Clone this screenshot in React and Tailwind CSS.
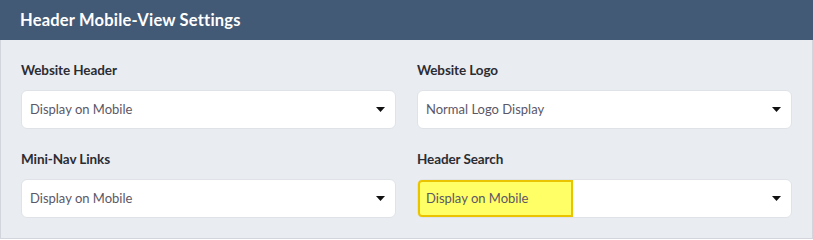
import React from 'react'

function Select({ value, highlight }) {
  return (
    <div className="relative h-[39px] rounded-md border border-[#dfe3e8] bg-white flex items-center justify-between px-[9px]">
      {highlight && (
        <div className="absolute left-0 top-0 bottom-0 w-[155px] rounded-l-sm bg-[#ffff66] border-2 border-[#ebc400]" />
      )}
      <span className="relative -ml-[1px] text-[13px] text-[#5b5766]">{value}</span>
      <svg className="relative mr-[1px]" width="9" height="5" viewBox="0 0 9 5">
        <path d="M0 0 H9 L4.5 5 Z" fill="#111" />
      </svg>
    </div>
  )
}

function Field({ label, value, highlight }) {
  return (
    <div className="flex flex-col">
      <label className="h-5 leading-5 text-[13.5px] font-bold text-[#2c2c33] mb-[10px] tracking-[-0.1px]">{label}</label>
      <Select value={value} highlight={highlight} />
    </div>
  )
}

export default function App() {
  return (
    <div className="w-[813px] h-[240px] bg-white" style={{ fontFamily: 'Lato, "Noto Sans", sans-serif' }}>
      <div className="h-10 bg-[#435a76] flex items-center px-5">
        <h2 className="text-[16.5px] font-bold text-white tracking-[0.2px]">Header Mobile-View Settings</h2>
      </div>
      <div className="bg-[#e9edf2] border-x border-b border-[#d2d6dc] px-5 pt-5 pb-5 grid grid-cols-2 gap-x-[21px] gap-y-5">
        <Field label="Website Header" value="Display on Mobile" />
        <Field label="Website Logo" value="Normal Logo Display" />
        <Field label="Mini-Nav Links" value="Display on Mobile" />
        <Field label="Header Search" value="Display on Mobile" highlight />
      </div>
    </div>
  )
}
